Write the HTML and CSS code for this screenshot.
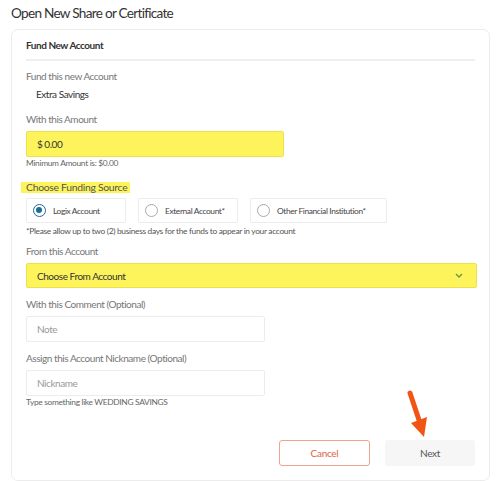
FILE: index.html
```html
<!DOCTYPE html>
<html>
<head>
<meta charset="utf-8">
<link rel="stylesheet" href="styles.css">
</head>
<body>
<h1 class="page-title">Open New Share or Certificate</h1>
<div class="card">
  <div class="card-header">Fund New Account</div>
  <div class="divider"></div>

  <div class="label first">Fund this new Account</div>
  <div class="value">Extra Savings</div>

  <div class="label gap-amount">With this Amount</div>
  <div class="input yellow amount"><span class="dollar">$</span>0.00</div>
  <div class="hint">Minimum Amount is: $0.00</div>

  <div class="label source"><span class="hl">Choose Funding Source</span></div>
  <div class="radios">
    <div class="radio-box w1"><span class="radio checked"></span>Logix Account</div>
    <div class="radio-box w2"><span class="radio"></span>External Account*</div>
    <div class="radio-box w3"><span class="radio"></span>Other Financial Institution*</div>
  </div>
  <div class="hint note">*Please allow up to two (2) business days for the funds to appear in your account</div>

  <div class="label from">From this Account</div>
  <div class="input yellow select">
    <span>Choose From Account</span>
    <svg class="chev" width="8" height="5" viewBox="0 0 8 5"><path d="M1 1 L4 4 L7 1" fill="none" stroke="#5f9a3c" stroke-width="1.3"/></svg>
  </div>

  <div class="label gap-field">With this Comment (Optional)</div>
  <div class="input plain">Note</div>

  <div class="label gap-field">Assign this Account Nickname (Optional)</div>
  <div class="input plain">Nickname</div>
  <div class="hint">Type something like WEDDING SAVINGS</div>

  <div class="actions">
    <button class="btn cancel">Cancel</button>
    <button class="btn next">Next</button>
  </div>

  <svg class="arrow" width="40" height="56" viewBox="0 0 40 56">
    <path d="M6 3 L15 30" stroke="#f05516" stroke-width="5" stroke-linecap="round" fill="none"/>
    <path d="M7 33 L23 27 L20 47 Z" fill="#f05516"/>
  </svg>
</div>
</body>
</html>
```
FILE: styles.css
```css
* { box-sizing: border-box; }
body {
  margin: 0;
  padding: 3px 0 0 0;
  background: #fff;
  font-family: "Lato", "Liberation Sans", sans-serif;
  color: #333;
  width: 500px;
  height: 481px;
  overflow: hidden;
}
.page-title {
  margin: 0 0 6px 11px;
  font-size: 13.6px;
  letter-spacing: -0.72px;
  line-height: 20px;
  font-weight: 400;
  color: #333;
}
.card {
  position: relative;
  margin-left: 11px;
  width: 479px;
  height: 452px;
  border: 1px solid #ececec;
  border-radius: 7px;
  padding: 0 12px 0 14px;
}
.card-header {
  padding: 8px 0 7px 0;
  font-size: 10px;
  letter-spacing: -0.45px;
  line-height: 14px;
  font-weight: 700;
  color: #333;
}
.divider {
  height: 2px;
  background: #efefef;
  margin-right: 2px;
}
.label {
  font-size: 10px;
  letter-spacing: -0.45px;
  line-height: 14px;
  color: #777;
}
.label.first { margin-top: 8px; }
.value {
  margin-top: 4px;
  padding-left: 10px;
  font-size: 10px;
  letter-spacing: -0.45px;
  line-height: 14px;
  color: #333;
}
.gap-amount { margin-top: 11px; }
.input {
  margin-top: 5px;
  height: 26px;
  display: flex;
  align-items: center;
  padding-left: 10px;
  font-size: 10px;
  letter-spacing: -0.45px;
  border-radius: 2px;
}
.yellow {
  background: #fdf45c;
  border: 1px solid #ede04c;
  color: #333;
}
.amount { width: 258px; }
.dollar { margin-right: 2px; }
.hint {
  margin-top: 1px;
  font-size: 8.4px;
  letter-spacing: -0.32px;
  line-height: 11px;
  color: #666;
}
.source { margin-top: 13px; line-height: 11px; }
.hl {
  display: inline-block;
  background: #fdf45c;
  color: #555;
  margin-left: -5px;
  padding: 0 3px 0 5px;
  line-height: 11px;
  height: 11px;
  font-size: 10.4px;
  letter-spacing: -0.3px;
}
.radios {
  display: flex;
  margin-top: 5px;
}
.radio-box {
  height: 25px;
  border: 1px solid #ececec;
  border-radius: 2px;
  display: flex;
  align-items: center;
  padding-left: 6px;
  font-size: 8.4px;
  letter-spacing: -0.38px;
  color: #444;
  margin-right: 12px;
}
.w1 { width: 100px; }
.w2 { width: 100px; }
.w3 { width: 137px; margin-right: 0; }
.radio {
  width: 13px;
  height: 13px;
  border-radius: 50%;
  border: 1px solid #aaa;
  margin-right: 7px;
  flex: none;
  position: relative;
}
.radio.checked {
  border: 1.5px solid #1d6b98;
}
.radio.checked::after {
  content: "";
  position: absolute;
  left: 2px;
  top: 2px;
  width: 6px;
  height: 6px;
  border-radius: 50%;
  background: #1d6b98;
}
.note { margin-top: 3px; color: #555; }
.from { margin-top: 7px; }
.select {
  margin-top: 5px;
  height: 25px;
  justify-content: space-between;
  padding-right: 13px;
}
.gap-field { margin-top: 9px; }
.plain {
  width: 239px;
  border: 1px solid #ececec;
  color: #999;
  margin-top: 5px;
}
.actions {
  display: flex;
  justify-content: flex-end;
  gap: 15px;
  margin-top: 32px;
  margin-right: 2px;
}
.btn {
  width: 91px;
  height: 26px;
  font-family: inherit;
  font-size: 10px;
  letter-spacing: -0.3px;
  border-radius: 3px;
  cursor: pointer;
}
.cancel {
  background: #fff;
  border: 1px solid #eea48e;
  color: #e0643e;
}
.next {
  width: 90px;
  background: #f6f6f6;
  border: none;
  color: #555;
}
.arrow {
  position: absolute;
  left: 392px;
  top: 360px;
}
```
